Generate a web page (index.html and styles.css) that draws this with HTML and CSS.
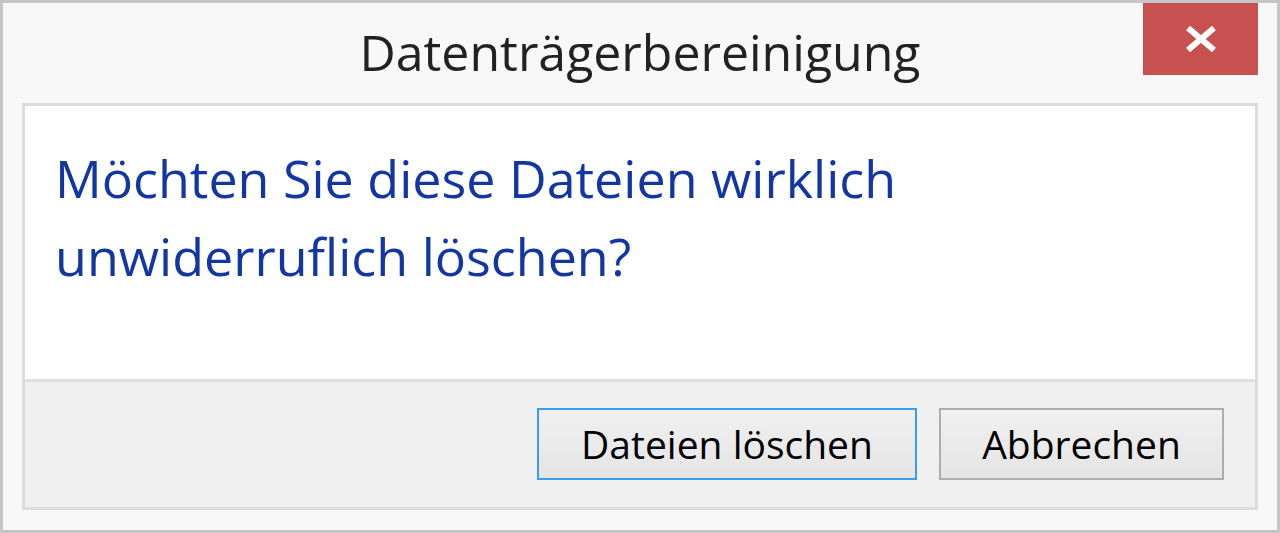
FILE: index.html
```html
<!DOCTYPE html>
<html lang="de">
<head>
    <meta charset="UTF-8">
    <title>Datenträgerbereinigung</title>
    <link rel="stylesheet" href="styles.css">
</head>
<body>
    <div class="window">
        <div class="titlebar">
            <div class="title">Datenträgerbereinigung</div>
            <div class="close">
                <svg width="32" height="26" viewBox="0 0 32 26">
                    <path d="M3 2 L29 24 M29 2 L3 24" stroke="#fff" stroke-width="6" fill="none"/>
                </svg>
            </div>
        </div>
        <div class="panel">
            <div class="content">
                <p class="message">Möchten Sie diese Dateien wirklich unwiderruflich löschen?</p>
            </div>
            <div class="footer">
                <button class="btn btn-default">Dateien löschen</button>
                <button class="btn btn-cancel">Abbrechen</button>
            </div>
        </div>
    </div>
</body>
</html>
```

FILE: styles.css
```css
body {
    margin: 0;
    font-family: "Open Sans", "Noto Sans", sans-serif;
}

.window {
    width: 1280px;
    height: 533px;
    box-sizing: border-box;
    border: 3px solid #c6c6c6;
    background: #f8f8f8;
    display: flex;
    flex-direction: column;
}

/* titelleiste */
.titlebar {
    height: 100px;
    display: grid;
    grid-template-columns: 1fr auto 1fr;
}
.title {
    grid-column: 2;
    font-size: 50px;
    color: #222;
    line-height: 50px;
    padding-top: 24px;
}
.close {
    grid-column: 3;
    justify-self: end;
    margin-right: 19px;
    width: 115px;
    height: 72px;
    background: #c75050;
    display: flex;
    align-items: center;
    justify-content: center;
}

/* inhalt */
.panel {
    margin: 0 19px 0 19px;
    height: 407px;
    box-sizing: border-box;
    border: 3px solid #dcdcdc;
    display: flex;
    flex-direction: column;
}
.content {
    flex: 1;
    background: #fff;
    border-bottom: 3px solid #dfdfdf;
    padding: 33px 30px 0 30px;
}
.message {
    margin: 0;
    font-size: 52px;
    line-height: 78px;
    color: #1236a4;
    width: 900px;
}
.footer {
    height: 125px;
    background: #f0f0f0;
    display: flex;
    justify-content: flex-end;
    align-items: flex-start;
    gap: 22px;
    padding: 26px 31px 0 0;
    box-sizing: border-box;
}
.btn {
    height: 72px;
    box-sizing: border-box;
    font-family: inherit;
    font-size: 39px;
    color: #000;
    background: linear-gradient(#f0f0f0, #e5e5e5);
    border: 2px solid #adadad;
    padding: 0 0 2px 0;
}
.btn-default {
    width: 380px;
    border-color: #3c9bef;
}
.btn-cancel {
    width: 285px;
}
```
